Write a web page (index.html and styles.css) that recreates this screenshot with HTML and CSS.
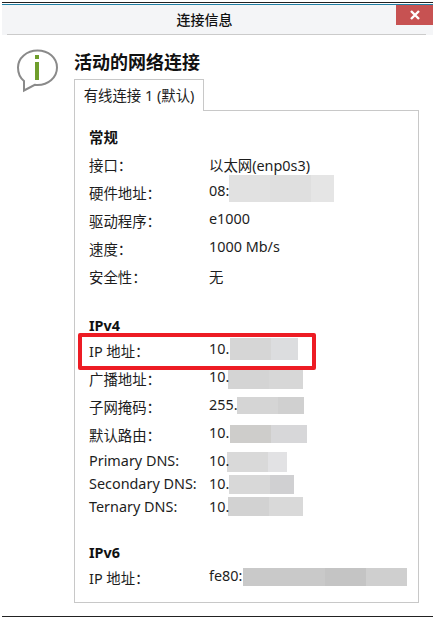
FILE: index.html
```html
<!DOCTYPE html>
<html lang="zh">
<head>
<meta charset="utf-8">
<title>连接信息</title>
<link rel="stylesheet" href="styles.css">
</head>
<body>
<div class="window">
  <header class="titlebar">
    <div class="title">连接信息</div>
    <div class="close"><svg width="10" height="10" viewBox="0 0 10 10"><path d="M1 1L9 9M9 1L1 9" stroke="#fff" stroke-width="2.400" fill="none"/></svg></div>
  </header>
  <div class="content">
    <svg class="info" width="44" height="46" viewBox="0 0 44 46">
      <path d="M21.500 2.500C10.700 2.500 2 9.900 2 19.500c0 5.800 2.300 10.500 6 13.500v9.500l10.800-5.700c.9.100 1.800.2 2.700.2 10.800 0 19.500-7.600 19.500-17.500S32.300 2.500 21.500 2.500z" fill="#fff" stroke="#8a8a8a" stroke-width="2"/>
      <rect x="19" y="7" width="4" height="4" fill="#6f9e2c"/>
      <rect x="19" y="14" width="4" height="18" fill="#6f9e2c"/>
    </svg>
    <main class="main">
      <h1 class="heading">活动的网络连接</h1>
      <div class="tabs"><div class="tab">有线连接 1 (默认)</div><div class="tab-rest"></div></div>
      <section class="panel">
        <h2 class="group-title first">常规</h2>
        <div class="row tall"><span class="label">接口<span class="colon">：</span></span><span class="value">以太网(enp0s3)</span></div>
        <div class="row tall"><span class="label">硬件地址<span class="colon">：</span></span><span class="value raised">08:</span><i class="blur b-hw"></i></div>
        <div class="row tall"><span class="label">驱动程序<span class="colon">：</span></span><span class="value raised">e1000</span></div>
        <div class="row tall"><span class="label">速度<span class="colon">：</span></span><span class="value raised">1000 Mb/s</span></div>
        <div class="row tall"><span class="label">安全性<span class="colon">：</span></span><span class="value">无</span></div>

        <h2 class="group-title second">IPv4</h2>
        <div class="row tall"><span class="label">IP 地址<span class="colon">：</span></span><span class="value raised">10.</span><i class="blur b-ip"></i></div>
        <div class="row tall"><span class="label">广播地址<span class="colon">：</span></span><span class="value raised">10.</span><i class="blur b-bc"></i></div>
        <div class="row tall"><span class="label">子网掩码<span class="colon">：</span></span><span class="value raised">255.</span><i class="blur b-mask"></i></div>
        <div class="row tall"><span class="label">默认路由<span class="colon">：</span></span><span class="value raised">10.</span><i class="blur b-gw"></i></div>
        <div class="row short first-dns"><span class="label">Primary DNS:</span><span class="value">10.</span><i class="blur b-dns1"></i></div>
        <div class="row short"><span class="label">Secondary DNS:</span><span class="value">10.</span><i class="blur b-dns2"></i></div>
        <div class="row short"><span class="label">Ternary DNS:</span><span class="value">10.</span><i class="blur b-dns3"></i></div>

        <h2 class="group-title third">IPv6</h2>
        <div class="row tall"><span class="label">IP 地址<span class="colon">：</span></span><span class="value raised">fe80:</span><i class="blur b-v6"></i></div>
      </section>
    </main>
  </div>
  <div class="highlight"></div>
  <div class="bottom-line"></div>
</div>
</body>
</html>
```
FILE: styles.css
```css
* { box-sizing: border-box; }
html, body { margin: 0; padding: 0; background: #fff; }
body {
  font-family: "Noto Sans", "Noto Sans CJK SC", sans-serif;
  font-size: 14.4px;
  color: #1d1d1d;
}
.window {
  position: relative;
  width: 433px;
  height: 619px;
  padding-top: 2px;
  overflow: hidden;
}
.titlebar {
  position: relative;
  height: 33px;
  display: flex;
  justify-content: center;
  align-items: center;
  margin-left: 2px;
  padding: 0 26px 0 0;
  background: #f4f5f7;
  border-top: 1px solid #222;
  box-shadow: inset 0 1px 0 #fff, inset 0 2px 0 #1f7fa5;
}
.titlebar::after {
  content: "";
  position: absolute;
  left: 5px;
  right: 7px;
  bottom: 0;
  height: 1px;
  background: #cbcbcb;
}
.title { font-size: 14px; font-weight: 500; color: #111; }
.close {
  position: absolute;
  top: 2px;
  right: 0;
  width: 37px;
  height: 20px;
  display: flex;
  align-items: center;
  justify-content: center;
  background: #c75252;
}
.content {
  display: flex;
  padding: 14px 14px 0 16px;
}
.info { flex: none; margin-right: 14px; margin-top: -1px; }
.main { flex: 1; }
.heading {
  margin: 0;
  font-size: 18px;
  font-weight: 700;
  line-height: 26px;
  height: 30px;
  color: #111;
}
.tabs { display: flex; height: 32px; }
.tab {
  width: 130px;
  height: 32px;
  border: 1px solid #c8c8c8;
  border-bottom: 0;
  background: #fff;
  line-height: 31px;
  text-align: center;
}
.tab-rest { flex: 1; border-bottom: 1px solid #c8c8c8; }
.panel {
  height: 493px;
  margin-top: -1px;
  padding: 18px 14px 0;
  border: 1px solid #c8c8c8;
  border-top: 0;
}
.group-title {
  margin: 0;
  font-size: 14.400px;
  font-weight: 700;
  line-height: 20px;
  color: #111;
}
.first { margin-bottom: 2px; }
.second { margin-top: 26px; }
.third { margin-top: 25px; }
.first-dns { margin-top: 1px; }
.row { position: relative; display: flex; align-items: center; }
.tall { height: 28px; }
.short { height: 23px; }
.label { flex: none; width: 120px; }
.colon { font-family: "Noto Sans CJK TC", sans-serif; }
.value { position: relative; z-index: 1; display: block; }
.raised { padding-bottom: 4px; }
.blur { position: absolute; display: block; }
.b-hw { left: 140px; top: -3px; width: 105px; height: 27px; background: linear-gradient(90deg, #e1e1e1 0 41px, #dfdfdf 41px 82px, #e5e5e5 82px); }
.b-ip { left: 141px; top: 2px; width: 68px; height: 22px; background: linear-gradient(90deg, #d6d6d6 0 41px, #dcdddf 41px); }
.b-bc { left: 139px; top: 6px; width: 75px; height: 19px; background: linear-gradient(90deg, #d4d4d4 0 41px, #d7d7d7 41px); }
.b-mask { left: 148px; top: 5px; width: 67px; height: 17px; background: linear-gradient(90deg, #d5d5d5 0 41px, #d0d0d0 41px); }
.b-gw { left: 141px; top: 5px; width: 77px; height: 18px; background: linear-gradient(90deg, #cecdcb 0 41px, #d7d7d9 41px); }
.b-dns1 { left: 138px; top: 3px; width: 60px; height: 20px; background: linear-gradient(90deg, #d9d9d9 0 41px, #e2e2e4 41px); }
.b-dns2 { left: 140px; top: 3px; width: 65px; height: 19px; background: linear-gradient(90deg, #d8d8d8 0 41px, #d0d0d2 41px); }
.b-dns3 { left: 139px; top: 2px; width: 75px; height: 19px; background: linear-gradient(90deg, #d2d2d2 0 41px, #d9d9d9 41px); }
.b-v6 { left: 154px; top: 5px; width: 164px; height: 18px; background: linear-gradient(90deg, #c9c9c9 0 82px, #c4c4c4 82px 123px, #cfcfcf 123px); }
.highlight {
  position: absolute;
  left: 78px;
  top: 333px;
  width: 238px;
  height: 37px;
  border: 4px solid #ed1c24;
  border-radius: 2px;
}
.bottom-line {
  position: absolute;
  left: 2px;
  right: 0;
  top: 616px;
  height: 1px;
  background: #222;
}
```
